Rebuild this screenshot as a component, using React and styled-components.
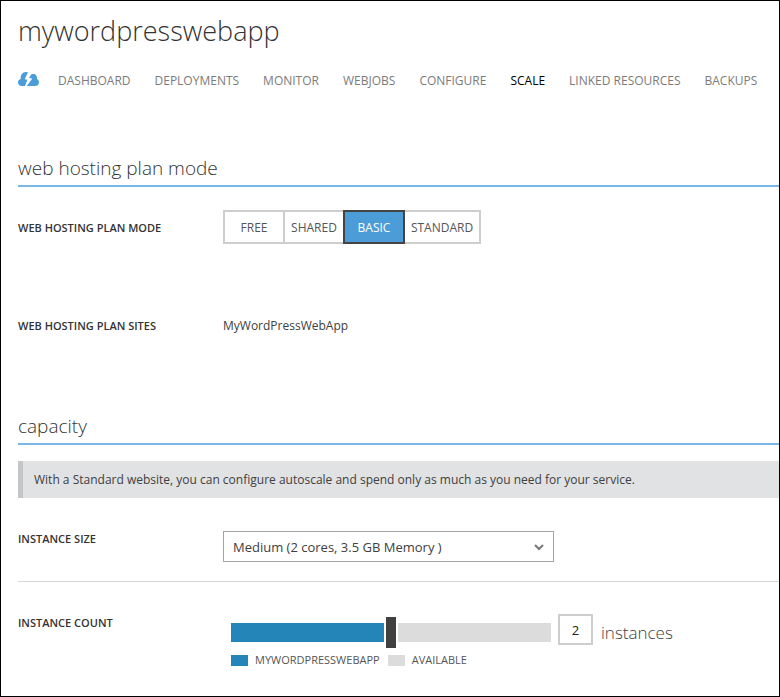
import React, { useState } from "react";
import styled, { createGlobalStyle } from "styled-components";

const GlobalStyle = createGlobalStyle`
  *, *::before, *::after { box-sizing: border-box; }
  body { margin: 0; background: #fff; }
  body, button, input, select { font-family: "Open Sans", "Segoe UI", sans-serif; }
`;

const Page = styled.main`
  min-height: 100vh;
  padding: 10px 0 20px 17px;
  border: 1px solid #000;
  color: #404040;
  overflow: hidden;
`;

const Title = styled.h1`
  margin: 0;
  font-size: 27px;
  line-height: 40px;
  font-weight: 300;
  color: #333;
`;

const Nav = styled.nav`
  display: flex;
  align-items: center;
  gap: 24px;
  height: 24px;
  margin-top: 18px;
  padding-right: 20px;
`;

const HomeLink = styled.a`
  display: flex;
  width: 21px;
  margin: 0 -5px 4px 0;
`;

const CloudSvg = styled.svg`
  flex: none;
  width: 21px;
  height: 16px;
`;

const NavLink = styled.a`
  font-size: 12px;
  line-height: 24px;
  white-space: nowrap;
  text-decoration: none;
  color: ${(p) => (p.$active ? "#000" : "#7b7b7b")};
`;

const SectionTitle = styled.h2`
  margin: ${(p) => p.$top}px 0 0;
  padding-bottom: 3px;
  border-bottom: 2px solid #7ab6e6;
  font-size: 19px;
  line-height: 28px;
  font-weight: 300;
  color: #333;
`;

const Row = styled.div`
  display: grid;
  grid-template-columns: 205px minmax(0, 1fr);
  min-height: ${(p) => p.$height}px;
  padding-top: ${(p) => p.$top}px;
  border-bottom: ${(p) => (p.$ruled ? "1px solid #d8d8d8" : "none")};
`;

const Label = styled.label`
  padding-top: ${(p) => p.$offset || 0}px;
  font-size: 11px;
  line-height: 16px;
  font-weight: 600;
  color: #333;
`;

const Value = styled.span`
  font-size: 12px;
  line-height: 16px;
`;

const Segments = styled.div`
  display: flex;
  height: 34px;
`;

const Segment = styled.button`
  position: relative;
  z-index: ${(p) => (p.$selected ? 1 : 0)};
  width: ${(p) => p.$width}px;
  padding: 2px 0 0;
  border: 2px solid ${(p) => (p.$selected ? "#444" : "#cdcdcd")};
  background: ${(p) => (p.$selected ? "#4c9cd8" : "#fff")};
  color: ${(p) => (p.$selected ? "#fff" : "#555")};
  font-size: 12px;
  line-height: 16px;

  & + & { margin-left: -2px; }
`;

const Notice = styled.p`
  margin: 16px 0 0;
  padding: 10px 12px 9px 11px;
  border-left: 5px solid #c5c6c7;
  background: #e1e2e4;
  font-size: 12px;
  line-height: 18px;
`;

const SelectWrap = styled.div`
  display: grid;
  align-items: center;
  width: 331px;
  height: 31px;
`;

const Select = styled.select`
  grid-area: 1 / 1;
  width: 100%;
  height: 100%;
  padding: 0 32px 0 9px;
  border: 1px solid #a4a4a4;
  border-radius: 0;
  background: #fff;
  color: #404040;
  font-size: 13px;
  appearance: none;
`;

const Chevron = styled.svg`
  grid-area: 1 / 1;
  justify-self: end;
  width: 10px;
  height: 8px;
  margin-right: 10px;
  pointer-events: none;
`;

const CountControls = styled.div`
  display: flex;
  align-items: flex-start;
  padding-left: 8px;
`;

const SliderColumn = styled.div`
  width: 320px;
  padding-top: 3px;
`;

const Slider = styled.input`
  display: block;
  width: 100%;
  height: 31px;
  margin: 0;
  background: transparent;
  appearance: none;

  &::-webkit-slider-runnable-track {
    height: 19px;
    background: linear-gradient(to right, #2486b8 var(--fill), #dcdcdc var(--fill));
  }

  &::-webkit-slider-thumb {
    width: 10px;
    height: 31px;
    margin-top: -6px;
    border: 0;
    border-radius: 0;
    background: #404040;
    box-shadow: 0 0 0 2px #fff;
    appearance: none;
  }
`;

const Legend = styled.ul`
  display: flex;
  gap: 8px;
  margin: 4px 0 0;
  padding: 0;
  list-style: none;
`;

const LegendItem = styled.li`
  display: flex;
  align-items: center;
  gap: 7px;
  font-size: 11px;
  line-height: 16px;
  white-space: nowrap;
  color: #555;

  &::before {
    content: "";
    width: 17px;
    height: 11px;
    background: ${(p) => p.$color};
  }
`;

const CountInput = styled.input`
  width: 35px;
  height: 31px;
  margin-left: 7px;
  padding: 0;
  border: 2px solid #cdcdcd;
  background: #fff;
  color: #222;
  font-size: 13px;
  text-align: center;
`;

const Unit = styled.span`
  margin: 6px 0 0 8px;
  font-size: 17px;
  line-height: 26px;
  font-weight: 300;
`;

const tabs = ["DASHBOARD", "DEPLOYMENTS", "MONITOR", "WEBJOBS", "CONFIGURE", "SCALE", "LINKED RESOURCES", "BACKUPS"];
const modes = [
  { name: "FREE", width: 62 },
  { name: "SHARED", width: 62 },
  { name: "BASIC", width: 62 },
  { name: "STANDARD", width: 78 },
];
const MIN = 1;
const MAX = 3;

function CloudIcon() {
  return (
    <CloudSvg viewBox="0 0 21 16" aria-hidden="true">
      <path
        fill="#4c9cd8"
        d="M4 15C1.600 15 0 13.500 0 11.400c0-1.800 1-3 2.700-3.400C2.300 4 4.600 1 7.800 1c.8 0 1.500.1 2.100.4L6.700 8.200l2.700.5L7 15zM8.800 15l5.500-7.500-3.200-.6 2-3.400c3.400-1.500 6.600.9 5.800 4.500 1.300.7 2.100 1.800 2.100 3.300 0 2.300-1.500 3.700-3.800 3.700z"
      />
    </CloudSvg>
  );
}

export default function App() {
  const [mode, setMode] = useState("BASIC");
  const [count, setCount] = useState(2);
  const fill = `${((Math.min(MAX, Math.max(MIN, count)) - MIN) / (MAX - MIN)) * 100}%`;
  const changeCount = (e) => setCount(Number(e.target.value));

  return (
    <>
      <GlobalStyle />
      <Page>
        <Title>mywordpresswebapp</Title>
        <Nav>
          <HomeLink href="#home" aria-label="Quick start">
            <CloudIcon />
          </HomeLink>
          {tabs.map((tab) => (
            <NavLink key={tab} href="#tab" $active={tab === "SCALE"}>
              {tab}
            </NavLink>
          ))}
        </Nav>

        <SectionTitle $top={61}>web hosting plan mode</SectionTitle>
        <Row $top={23} $height={131}>
          <Label as="span" id="mode-label" $offset={10}>WEB HOSTING PLAN MODE</Label>
          <Segments role="group" aria-labelledby="mode-label">
            {modes.map(({ name, width }) => (
              <Segment
                key={name}
                type="button"
                $width={width}
                $selected={mode === name}
                aria-pressed={mode === name}
                onClick={() => setMode(name)}
              >
                {name}
              </Segment>
            ))}
          </Segments>
        </Row>
        <Row $top={0} $height={16}>
          <Label as="span">WEB HOSTING PLAN SITES</Label>
          <Value>MyWordPressWebApp</Value>
        </Row>

        <SectionTitle $top={78}>capacity</SectionTitle>
        <Notice>
          With a Standard website, you can configure autoscale and spend only as much as you need for your service.
        </Notice>
        <Row $top={33} $height={84} $ruled>
          <Label htmlFor="size">INSTANCE SIZE</Label>
          <SelectWrap>
            <Select id="size" defaultValue="medium">
              <option value="medium">Medium (2 cores, 3.5 GB Memory )</option>
            </Select>
            <Chevron viewBox="0 0 10 8" aria-hidden="true">
              <path d="M1 2l4 4 4-4" fill="none" stroke="#777" strokeWidth="2" />
            </Chevron>
          </SelectWrap>
        </Row>
        <Row $top={32} $height={86}>
          <Label htmlFor="count" $offset={1}>INSTANCE COUNT</Label>
          <CountControls>
            <SliderColumn>
              <Slider
                id="count"
                type="range"
                min={MIN}
                max={MAX}
                value={count}
                onChange={changeCount}
                style={{ "--fill": fill }}
              />
              <Legend>
                <LegendItem $color="#2486b8">MYWORDPRESSWEBAPP</LegendItem>
                <LegendItem $color="#dcdcdc">AVAILABLE</LegendItem>
              </Legend>
            </SliderColumn>
            <CountInput type="text" inputMode="numeric" aria-label="Instances" value={count} onChange={changeCount} />
            <Unit>instances</Unit>
          </CountControls>
        </Row>
      </Page>
    </>
  );
}
